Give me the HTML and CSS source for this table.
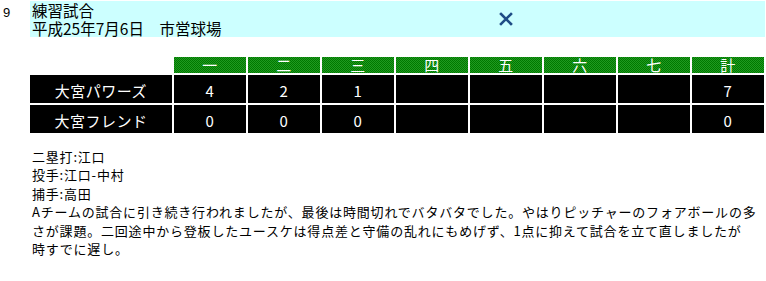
FILE: index.html
```html
<!DOCTYPE html>
<html lang="ja">
<head>
<meta charset="utf-8">
<link rel="stylesheet" href="styles.css">
</head>
<body>
<div class="entry">
  <div class="num">9</div>
  <div class="head">
    <div class="title">
      <div>練習試合</div>
      <div>平成25年7月6日　市営球場</div>
    </div>
    <div class="close">
      <svg width="14" height="14" viewBox="0 0 14 14"><path d="M2 2 L12 12 M12 2 L2 12" stroke="#1f4d86" stroke-width="2.6" stroke-linecap="square"/></svg>
    </div>
  </div>
</div>
<table class="score">
  <tr class="hdr">
    <td class="blank"></td>
    <th>一</th><th>二</th><th>三</th><th>四</th><th>五</th><th>六</th><th>七</th><th>計</th>
  </tr>
  <tr class="row">
    <td class="team">大宮パワーズ</td>
    <td>4</td><td>2</td><td>1</td><td></td><td></td><td></td><td></td><td>7</td>
  </tr>
  <tr class="row">
    <td class="team">大宮フレンド</td>
    <td>0</td><td>0</td><td>0</td><td></td><td></td><td></td><td></td><td>0</td>
  </tr>
</table>
<div class="notes">
  <div>二塁打:江口</div>
  <div>投手:江口-中村</div>
  <div>捕手:高田</div>
  <p class="comment">Aチームの試合に引き続き行われましたが、最後は時間切れでバタバタでした。やはりピッチャーのフォアボールの多<br>さが課題。二回途中から登板したユースケは得点差と守備の乱れにもめげず、1点に抑えて試合を立て直しましたが<br>時すでに遅し。</p>
</div>
</body>
</html>
```
FILE: styles.css
```css
html, body {
  margin: 0;
  padding: 0;
  background: #ffffff;
  color: #000000;
  font-family: "Noto Sans CJK JP", "Noto Sans", sans-serif;
}

.entry {
  display: flex;
  padding-top: 1px;
}

.num {
  width: 27px;
  padding-left: 3px;
  font-size: 13px;
  line-height: 13px;
  padding-top: 5px;
  font-family: "Liberation Sans", sans-serif;
}

.head {
  width: 735px;
  height: 36px;
  background: #ccffff;
  display: grid;
  grid-template-columns: 217px 1fr;
}

.title {
  padding-left: 2px;
  font-size: 15.5px;
  line-height: 18px;
}

.close {
  display: flex;
  align-items: center;
  justify-content: center;
}

.close svg {
  display: block;
}

.score {
  margin-top: 18px;
  margin-left: 28px;
  border-collapse: separate;
  border-spacing: 2px;
  font-size: 15px;
  letter-spacing: 0.5px;
}

.score td, .score th {
  padding: 0;
  text-align: center;
  font-weight: normal;
}

.hdr th {
  width: 72px;
  height: 16px;
  line-height: 16px;
  color: #ffffff;
  background: repeating-conic-gradient(#007800 0 25%, #1f9a1f 0 50%) 0 0 / 2px 2px;
}

.hdr .blank {
  width: 142px;
  background: #ffffff;
}

.row td {
  height: 28px;
  background: #000000;
  color: #ffffff;
  vertical-align: middle;
  padding-top: 2px;
  box-sizing: border-box;
}

.notes {
  margin-top: 13px;
  padding-left: 32px;
  font-size: 13px;
  line-height: 18.4px;
  letter-spacing: 0.8px;
}

.comment {
  margin: 0;
  white-space: nowrap;
}
```
